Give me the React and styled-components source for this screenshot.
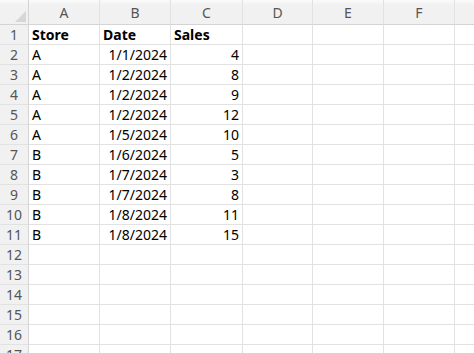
import { styled, createGlobalStyle } from 'styled-components'

const GlobalStyle = createGlobalStyle`
  * {
    margin: 0;
    padding: 0;
    box-sizing: border-box;
  }
  body {
    background: #ffffff;
    overflow: hidden;
    font-family: 'Noto Sans', 'Open Sans', sans-serif;
  }
`

const Sheet = styled.div`
  display: grid;
  grid-template-columns: 29px 71px 71px 72px 70px 71px 71px 40px;
  grid-template-rows: 25px;
  grid-auto-rows: 20px;
  width: 474px;
  height: 353px;
  overflow: hidden;
`

const Corner = styled.div`
  display: flex;
  align-items: flex-end;
  justify-content: flex-end;
  padding: 0 2px 2px 0;
  background: linear-gradient(#fbfbfb, #f1f1f1 5px);
  border-right: 1px solid #d4d4d4;
  border-bottom: 1px solid #d4d4d4;
`

const ColHead = styled.div`
  display: flex;
  align-items: center;
  justify-content: center;
  padding-top: 1px;
  background: linear-gradient(#fbfbfb, #f1f1f1 5px);
  border-right: 1px solid #e2e2e2;
  border-bottom: 1px solid #d4d4d4;
  color: #555;
  font-size: 14px;
`

const RowHead = styled.div`
  display: flex;
  align-items: center;
  justify-content: center;
  background: #f1f1f1;
  border-right: 1px solid #d4d4d4;
  border-bottom: 1px solid #e2e2e2;
  color: #555;
  font-size: 14px;
`

const Cell = styled.div`
  display: flex;
  align-items: center;
  justify-content: ${(p) => (p.$right ? 'flex-end' : 'flex-start')};
  padding: 0 3px;
  border-right: 1px solid #e2e2e2;
  border-bottom: 1px solid #e2e2e2;
  color: #000;
  font-size: 14px;
  font-weight: ${(p) => (p.$bold ? 700 : 400)};
  white-space: nowrap;
  overflow: hidden;
`

const columns = ['A', 'B', 'C', 'D', 'E', 'F', '']

const data = [
  ['A', '1/1/2024', 4],
  ['A', '1/2/2024', 8],
  ['A', '1/2/2024', 9],
  ['A', '1/2/2024', 12],
  ['A', '1/5/2024', 10],
  ['B', '1/6/2024', 5],
  ['B', '1/7/2024', 3],
  ['B', '1/7/2024', 8],
  ['B', '1/8/2024', 11],
  ['B', '1/8/2024', 15],
]

function SelectAll() {
  return (
    <svg width="11" height="11" viewBox="0 0 11 11">
      <polygon points="11,0 11,11 0,11" fill="#d6d6d6" />
    </svg>
  )
}

export default function App() {
  const rows = []
  for (let r = 1; r <= 17; r++) {
    let cells
    if (r === 1) {
      cells = [
        { v: 'Store', bold: true },
        { v: 'Date', bold: true },
        { v: 'Sales', bold: true },
      ]
    } else if (r <= 11) {
      const [store, date, sales] = data[r - 2]
      cells = [{ v: store }, { v: date, right: true }, { v: sales, right: true }]
    } else {
      cells = [{ v: '' }, { v: '' }, { v: '' }]
    }
    while (cells.length < 7) cells.push({ v: '' })
    rows.push(
      <RowHead key={`h${r}`}>{r}</RowHead>,
      ...cells.map((c, i) => (
        <Cell key={`${r}-${i}`} $bold={c.bold} $right={c.right}>
          {c.v}
        </Cell>
      ))
    )
  }

  return (
    <>
      <GlobalStyle />
      <Sheet>
        <Corner>
          <SelectAll />
        </Corner>
        {columns.map((c, i) => (
          <ColHead key={i}>{c}</ColHead>
        ))}
        {rows}
      </Sheet>
    </>
  )
}
